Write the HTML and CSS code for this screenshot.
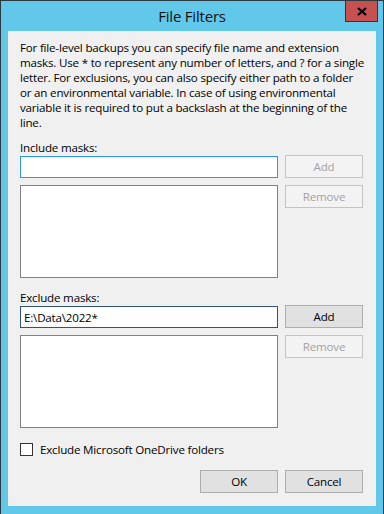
FILE: index.html
```html
<!DOCTYPE html>
<html lang="en">
<head>
    <meta charset="UTF-8">
    <meta name="viewport" content="width=device-width, initial-scale=1.0">
    <title>File Filters</title>
    <link rel="stylesheet" href="styles.css">
</head>
<body>

<div class="window">
    <div class="titlebar">
        <span class="title">File Filters</span>
        <button class="close-btn" title="Close">
            <svg width="10" height="9" viewBox="0 0 10 9">
                <path d="M1 1 L9 8 M9 1 L1 8" stroke="#000" stroke-width="2.2" fill="none"/>
            </svg>
        </button>
    </div>

    <div class="client">
        <p class="intro">For file-level backups you can specify file name and extension masks. Use * to represent any number of letters, and ? for a single letter. For exclusions, you can also specify either path to a folder or an environmental variable. In case of using environmental variable it is required to put a backslash at the beginning of the line.</p>

        <div class="mask-group">
            <label class="group-label" for="include-input">Include masks:</label>
            <div class="mask-grid">
                <input type="text" id="include-input" class="mask-input focused">
                <button class="btn" disabled>Add</button>
                <div class="listbox"></div>
                <button class="btn" disabled>Remove</button>
            </div>
        </div>

        <div class="mask-group exclude">
            <label class="group-label" for="exclude-input">Exclude masks:</label>
            <div class="mask-grid">
                <input type="text" id="exclude-input" class="mask-input hover" value="E:\Data\2022*">
                <button class="btn">Add</button>
                <div class="listbox"></div>
                <button class="btn" disabled>Remove</button>
            </div>
        </div>

        <label class="check-row">
            <span class="checkbox"></span>
            Exclude Microsoft OneDrive folders
        </label>

        <div class="dialog-buttons">
            <button class="btn">OK</button>
            <button class="btn">Cancel</button>
        </div>
    </div>
</div>

</body>
</html>
```

FILE: styles.css
```css
html, body {
    margin: 0;
    padding: 0;
}
body {
    font-family: "Segoe UI", "Open Sans", sans-serif;
    font-size: 11.6px;
    letter-spacing: -0.2px;
    color: #000;
    background-color: #62c8ea;
}
.window {
    width: 382px;
    height: 513px;
    background-color: #62c8ea;
    border: 1px solid #2c3a40;
    border-bottom: none;
    display: flex;
    flex-direction: column;
}
.titlebar {
    height: 30px;
    position: relative;
    display: flex;
    justify-content: center;
}
.title {
    font-size: 15px;
    letter-spacing: -0.2px;
    line-height: 15px;
    margin-top: 8px;
    color: #111;
}
.close-btn {
    position: absolute;
    top: 0;
    right: 5px;
    width: 33px;
    height: 21px;
    padding: 0;
    background-color: #c75050;
    border: 1px solid #4b2a2a;
    border-top: none;
    display: flex;
    align-items: center;
    justify-content: center;
}
.client {
    margin: 0 7px 0 7px;
    height: 475px;
    background-color: #f0f0f0;
    padding: 9px 13px 0 12px;
    box-sizing: border-box;
    display: flex;
    flex-direction: column;
}
.intro {
    margin: 0;
    line-height: 15px;
    width: 346px;
}
.mask-group {
    margin-top: 10px;
}
.mask-group.exclude {
    margin-top: 12px;
}
.group-label {
    display: block;
    line-height: 15px;
}
.mask-grid {
    display: grid;
    grid-template-columns: 258px 78px;
    column-gap: 7px;
    row-gap: 7px;
    align-items: start;
}
.mask-input {
    height: 22px;
    margin: 1px 0 0 0;
    box-sizing: border-box;
    border: 1px solid #7a7a7a;
    padding: 0 3px;
    font-family: inherit;
    font-size: 11.6px;
    letter-spacing: -0.2px;
    background-color: #fff;
    outline: none;
}
.mask-input.focused {
    border-color: #2a9be0;
}
.mask-input.hover {
    border-color: #2f5478;
}
.listbox {
    height: 93px;
    box-sizing: border-box;
    border: 1px solid #828282;
    background-color: #fff;
}
.btn {
    height: 23px;
    width: 78px;
    box-sizing: border-box;
    font-family: inherit;
    font-size: 11.6px;
    letter-spacing: -0.2px;
    color: #000;
    background-color: #e1e1e1;
    border: 1px solid #adadad;
    padding: 0;
}
.btn:disabled {
    color: #a3a3a3;
    background-color: #f3f3f3;
    border-color: #c4c4c4;
}
.check-row {
    display: flex;
    align-items: center;
    gap: 7px;
    margin-top: 14px;
    line-height: 15px;
}
.checkbox {
    width: 13px;
    height: 13px;
    box-sizing: border-box;
    border: 1px solid #333;
    background-color: #fff;
}
.dialog-buttons {
    display: flex;
    justify-content: flex-end;
    gap: 7px;
    margin-top: 13px;
}
```
